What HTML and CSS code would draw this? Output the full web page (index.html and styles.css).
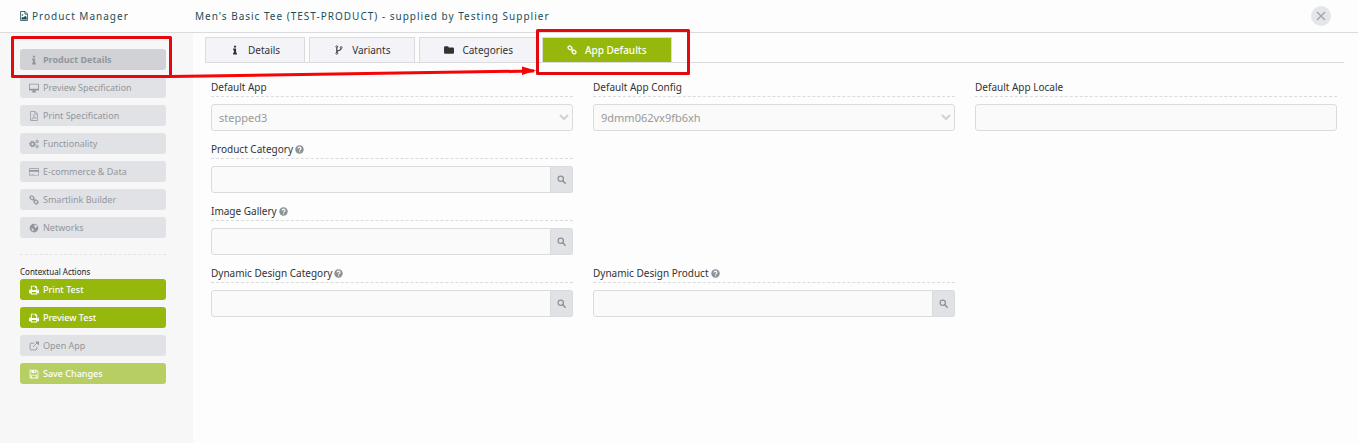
FILE: index.html
```html
<!DOCTYPE html>
<html lang="en">
<head>
  <meta charset="UTF-8">
  <meta name="viewport" content="width=device-width, initial-scale=1.0">
  <title>Product Manager</title>
  <link rel="stylesheet" href="styles.css">
</head>
<body>
  <svg class="sprite" aria-hidden="true">
    <symbol id="i-image" viewBox="0 0 16 16"><path d="M2.5.8h7.2l3.8 3.8v10.6h-11zM9.5 1v4h4" fill="none" stroke="currentColor" stroke-width="1.3"/><path d="M4 13.5V11l2-2 1.300 1.300L10 7.500l2.300 2.500v3.500z" fill="currentColor"/><circle cx="5.500" cy="6.300" r="1.300" fill="currentColor"/></symbol>
    <symbol id="i-info" viewBox="0 0 16 16"><path d="M6.300 1h3.400v2.800H6.300zM5 5.700h4.700v6.800H11V15H5v-2.500h1.300V8.200H5z" fill="currentColor"/></symbol>
    <symbol id="i-desktop" viewBox="0 0 16 16"><path d="M1.200 1h13.600q1.200 0 1.200 1.200v8.600q0 1.200-1.200 1.200H10l.500 2h1v1h-7v-1h1l.500-2H1.200Q0 12 0 10.800V2.200Q0 1 1.200 1zm.200 1.300v7h13.200v-7z" fill="currentColor" fill-rule="evenodd"/></symbol>
    <symbol id="i-pdf" viewBox="0 0 16 16"><path d="M2.500.8h7.200l3.800 3.800v10.600h-11zM9.500 1v4h4" fill="none" stroke="currentColor" stroke-width="1.200"/><path d="M4.300 13.300C6.500 12 8 8.500 7.600 5.800c0 3 2 5.200 4.400 5.400-2.800-.5-5.300.4-7.700 2.100z" fill="none" stroke="currentColor"/></symbol>
    <symbol id="i-cogs" viewBox="0 0 16 16"><g fill="none" stroke="currentColor"><circle cx="5.500" cy="8" r="3" stroke-width="2.400"/><circle cx="5.500" cy="8" r="4.700" stroke-width="1.600" stroke-dasharray="1.850 1.840"/><circle cx="13" cy="4" r="1.600" stroke-width="1.500"/><circle cx="13" cy="4" r="2.500" stroke-dasharray="1.300 1.310"/><circle cx="13" cy="12" r="1.600" stroke-width="1.500"/><circle cx="13" cy="12" r="2.500" stroke-dasharray="1.300 1.310"/></g></symbol>
    <symbol id="i-card" viewBox="0 0 16 16"><path d="M1.300 2h13.400Q16 2 16 3.300v9.400q0 1.300-1.300 1.300H1.300Q0 14 0 12.700V3.300Q0 2 1.300 2zM1 3.300v1.500h14V3.300zM1 7.500V13h14V7.500zM2 11h2v1H2zm3 0h3v1H5z" fill="currentColor" fill-rule="evenodd"/></symbol>
    <symbol id="i-link" viewBox="0 0 16 16"><g fill="none" stroke="currentColor" stroke-width="2"><rect x="1.600" y="2.100" width="6.500" height="5" rx="2.300" transform="rotate(45 4.800 4.600)"/><rect x="7.900" y="8.600" width="6.500" height="5" rx="2.300" transform="rotate(45 11.200 11.100)"/><path d="M6 6l4.200 4.200"/></g></symbol>
    <symbol id="i-globe" viewBox="0 0 16 16"><path d="M8 1a7 7 0 1 0 0 14A7 7 0 0 0 8 1zm1.500 1.500 2.700 1.500 1 2.500-1.700.3-1.300 1.200-1.200-1 .3-1.500-1.300-1zM4 8.500l3 1.200.5 1.500-1.300 2L4.500 11z" fill="currentColor" fill-rule="evenodd"/></symbol>
    <symbol id="i-print" viewBox="0 0 16 16"><path d="M3 1h8l2 2v4h1q2 0 2 2v4h-3v2H3v-2H0V9q0-2 2-2h1zm1.500 1.400V8h7V4.500h-2V2.400zm0 8.600v2.700h7V11zM13 8.500v1.200h1.200V8.500z" fill="currentColor" fill-rule="evenodd"/></symbol>
    <symbol id="i-open" viewBox="0 0 16 16"><path d="M8.500 3.500H3.200Q1.700 3.500 1.700 5v7.700q0 1.500 1.500 1.500H11q1.500 0 1.500-1.500V9.500M6.500 9.500l6.500-6.500" fill="none" stroke="currentColor" stroke-width="1.400"/><path d="M9.800.8H16V7z" fill="currentColor"/></symbol>
    <symbol id="i-save" viewBox="0 0 16 16"><path d="M1 1h11l3 3v11H1zm1.300 1.300v11.400h1.200V9h9v4.700h1.200V4.600l-2.200-2.300V6.500H4V2.300zM8 2.300v3h2v-3zM4.800 10.300v3.400h6.400v-3.400z" fill="currentColor" fill-rule="evenodd"/></symbol>
    <symbol id="i-fork" viewBox="0 0 16 16"><g fill="none" stroke="currentColor" stroke-width="1.300"><circle cx="4.500" cy="2.700" r="1.500"/><circle cx="4.500" cy="13.300" r="1.500"/><circle cx="11.500" cy="4" r="1.500"/><path d="M4.500 4.200v7.600M11.500 5.500c0 4-7 2.500-7 6" stroke-width="1.800"/></g></symbol>
    <symbol id="i-folder" viewBox="0 0 16 16"><path d="M2 2h3.500q2 0 2 2H14q2 0 2 2v6q0 2-2 2H2q-2 0-2-2V4q0-2 2-2z" fill="currentColor"/></symbol>
    <symbol id="i-help" viewBox="0 0 16 16"><circle cx="8" cy="8" r="7.500" fill="currentColor"/><path d="M5.400 6.200C5.500 2.800 10.600 3 10.600 6c0 2-2.500 1.800-2.500 3.800M8.100 11v2" fill="none" stroke="#fdfdfd" stroke-width="2"/></symbol>
    <symbol id="i-search" viewBox="0 0 16 16"><circle cx="6.700" cy="6.700" r="4.700" fill="none" stroke="currentColor" stroke-width="2.200"/><path d="M10.300 10.300l4.200 4.200" stroke="currentColor" stroke-width="2.600" stroke-linecap="round"/></symbol>
    <symbol id="i-close" viewBox="0 0 20 20"><path d="M6 6l8 8M14 6l-8 8" stroke="currentColor" stroke-width="1.500"/></symbol>
    <symbol id="i-down" viewBox="0 0 10 8"><path d="M1 2l4 4 4-4" fill="none" stroke="currentColor" stroke-width="2"/></symbol>
  </svg>

  <header>
    <h1><svg class="icon"><use href="#i-image"/></svg>Product Manager</h1>
    <h2>Men's Basic Tee (TEST-PRODUCT) - supplied by Testing Supplier</h2>
    <button class="close" aria-label="Close"><svg><use href="#i-close"/></svg></button>
  </header>

  <div class="container">
    <aside>
      <nav>
        <button class="btn active"><svg class="icon"><use href="#i-info"/></svg>Product Details</button>
        <button class="btn"><svg class="icon"><use href="#i-desktop"/></svg>Preview Specification</button>
        <button class="btn"><svg class="icon"><use href="#i-pdf"/></svg>Print Specification</button>
        <button class="btn"><svg class="icon"><use href="#i-cogs"/></svg>Functionality</button>
        <button class="btn"><svg class="icon"><use href="#i-card"/></svg>E-commerce &amp; Data</button>
        <button class="btn"><svg class="icon"><use href="#i-link"/></svg>Smartlink Builder</button>
        <button class="btn"><svg class="icon"><use href="#i-globe"/></svg>Networks</button>
      </nav>
      <div class="actions">
        <h3>Contextual Actions</h3>
        <button class="btn primary"><svg class="icon"><use href="#i-print"/></svg>Print Test</button>
        <button class="btn primary"><svg class="icon"><use href="#i-print"/></svg>Preview Test</button>
        <button class="btn"><svg class="icon"><use href="#i-open"/></svg>Open App</button>
        <button class="btn primary faded"><svg class="icon"><use href="#i-save"/></svg>Save Changes</button>
      </div>
    </aside>

    <main>
      <div class="tabs">
        <button class="tab"><svg class="icon"><use href="#i-info"/></svg>Details</button>
        <button class="tab"><svg class="icon"><use href="#i-fork"/></svg>Variants</button>
        <button class="tab"><svg class="icon"><use href="#i-folder"/></svg>Categories</button>
        <button class="tab active"><svg class="icon"><use href="#i-link"/></svg>App Defaults</button>
      </div>
      <form class="fields">
        <div class="field">
          <label for="app">Default App</label>
          <div class="select">
            <select id="app"><option>stepped3</option></select>
            <svg><use href="#i-down"/></svg>
          </div>
        </div>
        <div class="field">
          <label for="config">Default App Config</label>
          <div class="select">
            <select id="config"><option>9dmm062vx9fb6xh</option></select>
            <svg><use href="#i-down"/></svg>
          </div>
        </div>
        <div class="field">
          <label for="locale">Default App Locale</label>
          <input id="locale" type="text">
        </div>
        <div class="field first">
          <label for="category">Product Category <svg class="help"><use href="#i-help"/></svg></label>
          <div class="lookup">
            <input id="category" type="text">
            <button type="button" aria-label="Search product categories"><svg><use href="#i-search"/></svg></button>
          </div>
        </div>
        <div class="field first">
          <label for="gallery">Image Gallery <svg class="help"><use href="#i-help"/></svg></label>
          <div class="lookup">
            <input id="gallery" type="text">
            <button type="button" aria-label="Search image galleries"><svg><use href="#i-search"/></svg></button>
          </div>
        </div>
        <div class="field first">
          <label for="design-category">Dynamic Design Category <svg class="help"><use href="#i-help"/></svg></label>
          <div class="lookup">
            <input id="design-category" type="text">
            <button type="button" aria-label="Search design categories"><svg><use href="#i-search"/></svg></button>
          </div>
        </div>
        <div class="field">
          <label for="design-product">Dynamic Design Product <svg class="help"><use href="#i-help"/></svg></label>
          <div class="lookup">
            <input id="design-product" type="text">
            <button type="button" aria-label="Search design products"><svg><use href="#i-search"/></svg></button>
          </div>
        </div>
      </form>
    </main>
  </div>

  <!-- walkthrough markers -->
  <svg class="callout" viewBox="0 0 700 90" aria-hidden="true">
    <g fill="none" stroke="#e20a0e" stroke-width="3" stroke-linejoin="round">
      <rect x="12.500" y="37.500" width="158" height="39"/>
      <rect x="537.500" y="30.500" width="151" height="43"/>
    </g>
    <path d="M171 76.500L534 71" stroke="#f50505" stroke-width="3"/>
    <path d="M522 66.500L536 70.500L522 75z" fill="#f50505"/>
  </svg>
</body>
</html>
```
FILE: styles.css
```css
:root {
  --bg: #fdfdfd;
  --side-bg: #f7f7f7;
  --line: #d9dbdc;
  --grey: #e1e2e6;
  --grey-fg: #93969a;
  --green: #96b80c;
  --title: #1c4e58;
  --fg: #333;
}
* { box-sizing: border-box; }
body { margin: 0; min-height: 100vh; display: flex; flex-direction: column; background: var(--bg); color: var(--fg); font: 11px/16px "Noto Sans", sans-serif; }
button, input, select { font: inherit; color: inherit; margin: 0; }
button { cursor: pointer; }
h1, h2, h3 { margin: 0; font-weight: 400; }
.sprite { position: absolute; width: 0; height: 0; }
.icon { width: 10px; height: 10px; flex: none; }

header { display: flex; align-items: center; height: 33px; padding-right: 27px; border-bottom: 1px solid var(--line); color: var(--title); }
header h1, header h2 { font-size: 10px; letter-spacing: 1px; }
header h1 { display: flex; align-items: center; gap: 3px; width: 195px; padding-left: 19px; }
.close { width: 20px; height: 20px; margin-left: auto; padding: 0; border: 0; border-radius: 50%; background: #e4e6e9; color: #a5a9ad; }
.close svg { display: block; width: 20px; height: 20px; }

.container { display: flex; flex: 1; }
aside { width: 193px; flex: none; padding: 16px 27px 16px 20px; background: var(--side-bg); }
nav, .actions { display: flex; flex-direction: column; gap: 7px; }
nav { padding-bottom: 16px; border-bottom: 1px dashed #e4e4e4; }
.actions { padding-top: 9px; }
.actions h3 { font-size: 8px; margin-bottom: -8px; color: #222; }
.btn { display: flex; align-items: center; gap: 4px; height: 21px; padding: 0 9px; border: 0; border-radius: 3px; background: var(--grey); color: var(--grey-fg); font-size: 9px; }
.btn.active { background: #d1d2d5; font-weight: 700; }
.btn.primary { background: var(--green); color: #fff; font-weight: 500; }
.btn.faded { background: #b7ce62; }

main { flex: 1; min-width: 0; padding: 4px 14px 0 12px; }
.tabs { display: flex; gap: 4px; border-bottom: 1px solid var(--line); }
.tab { display: flex; align-items: center; gap: 8px; height: 26px; margin-bottom: -1px; padding: 0 24px; border: 1px solid var(--line); background: #f4f4f8; font-size: 10px; }
.tab.active { background: var(--green); color: #fff; font-weight: 500; }

.fields { display: grid; grid-template-columns: repeat(3, 1fr); gap: 11px 20px; padding: 17px 7px 0 6px; }
.first { grid-column-start: 1; }
.field label { display: flex; align-items: center; gap: 2px; height: 17px; margin-bottom: 7px; padding-bottom: 2px; border-bottom: 1px dashed var(--line); font-size: 10px; }
.help { width: 9px; height: 9px; color: #8d9295; }
.field input, .field select { display: block; width: 100%; height: 27px; padding: 0 7px; border: 1px solid var(--line); border-radius: 3px; background: #fafafa; color: #999; font-size: 11px; }
.select { position: relative; }
.select select { appearance: none; }
.select svg { position: absolute; right: 4px; top: 9px; width: 10px; height: 8px; color: #cfd1d3; pointer-events: none; }
.lookup { display: flex; }
.lookup input { flex: 1; min-width: 0; border-radius: 3px 0 0 3px; }
.lookup button { display: flex; align-items: center; justify-content: center; width: 22px; padding: 0; border: 1px solid var(--line); border-left: 0; border-radius: 0 3px 3px 0; background: var(--grey); color: #8d9093; }
.lookup svg { width: 9px; height: 9px; }

.callout { position: absolute; top: 0; left: 0; width: 700px; height: 90px; pointer-events: none; }
@media (max-width: 800px) {
  .fields { grid-template-columns: 1fr; }
}
```
